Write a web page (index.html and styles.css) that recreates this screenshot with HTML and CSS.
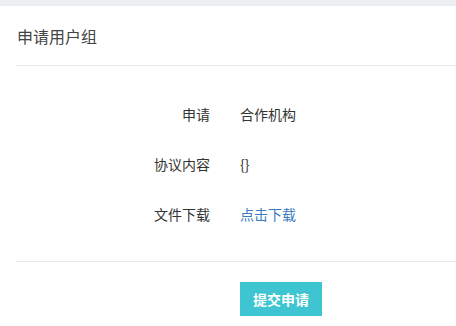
FILE: index.html
```html
<!DOCTYPE html>
<html lang="zh-CN">
<head>
<meta charset="utf-8">
<title>申请用户组</title>
<link rel="stylesheet" href="styles.css">
</head>
<body>
<div class="panel">
  <div class="panel-head">
    <h3 class="panel-title">申请用户组</h3>
  </div>
  <div class="form">
    <div class="form-row">
      <div class="form-label">申请</div>
      <div class="form-value">合作机构</div>
    </div>
    <div class="form-row">
      <div class="form-label">协议内容</div>
      <div class="form-value">{}</div>
    </div>
    <div class="form-row">
      <div class="form-label">文件下载</div>
      <div class="form-value"><a class="link" href="#">点击下载</a></div>
    </div>
  </div>
  <div class="form-actions">
    <button class="btn-submit" type="button">提交申请</button>
  </div>
</div>
</body>
</html>
```

FILE: styles.css
```css
html, body {
  margin: 0;
  padding: 0;
}
body {
  background: #eceff2;
  font-family: "Noto Sans CJK SC", "Noto Sans", sans-serif;
  color: #333;
  padding-top: 6px;
}
.panel {
  background: #fff;
  padding-left: 16px;
  height: 320px;
}
.panel-head {
  height: 59px;
  border-bottom: 1px solid #e8e8e8;
  display: flex;
  align-items: center;
  padding-left: 1px;
}
.panel-title {
  margin: 0;
  font-size: 16px;
  font-weight: normal;
  color: #444;
  line-height: 22px;
}
.form {
  display: flex;
  flex-direction: column;
  gap: 30px;
  padding: 38px 0 37px;
  border-bottom: 1px solid #e8e8e8;
}
.form-row {
  display: grid;
  grid-template-columns: 194px 1fr;
  column-gap: 30px;
  font-size: 14px;
  line-height: 20px;
}
.form-label {
  text-align: right;
  color: #333;
}
.form-value {
  color: #333;
}
.link {
  color: #3a7bbf;
  text-decoration: none;
}
.form-actions {
  padding: 20px 0 0 224px;
}
.btn-submit {
  display: block;
  width: 82px;
  height: 34px;
  border: 0;
  padding: 0;
  background: #3ec5d1;
  color: #fff;
  font-family: inherit;
  font-size: 14px;
  font-weight: bold;
}
```
